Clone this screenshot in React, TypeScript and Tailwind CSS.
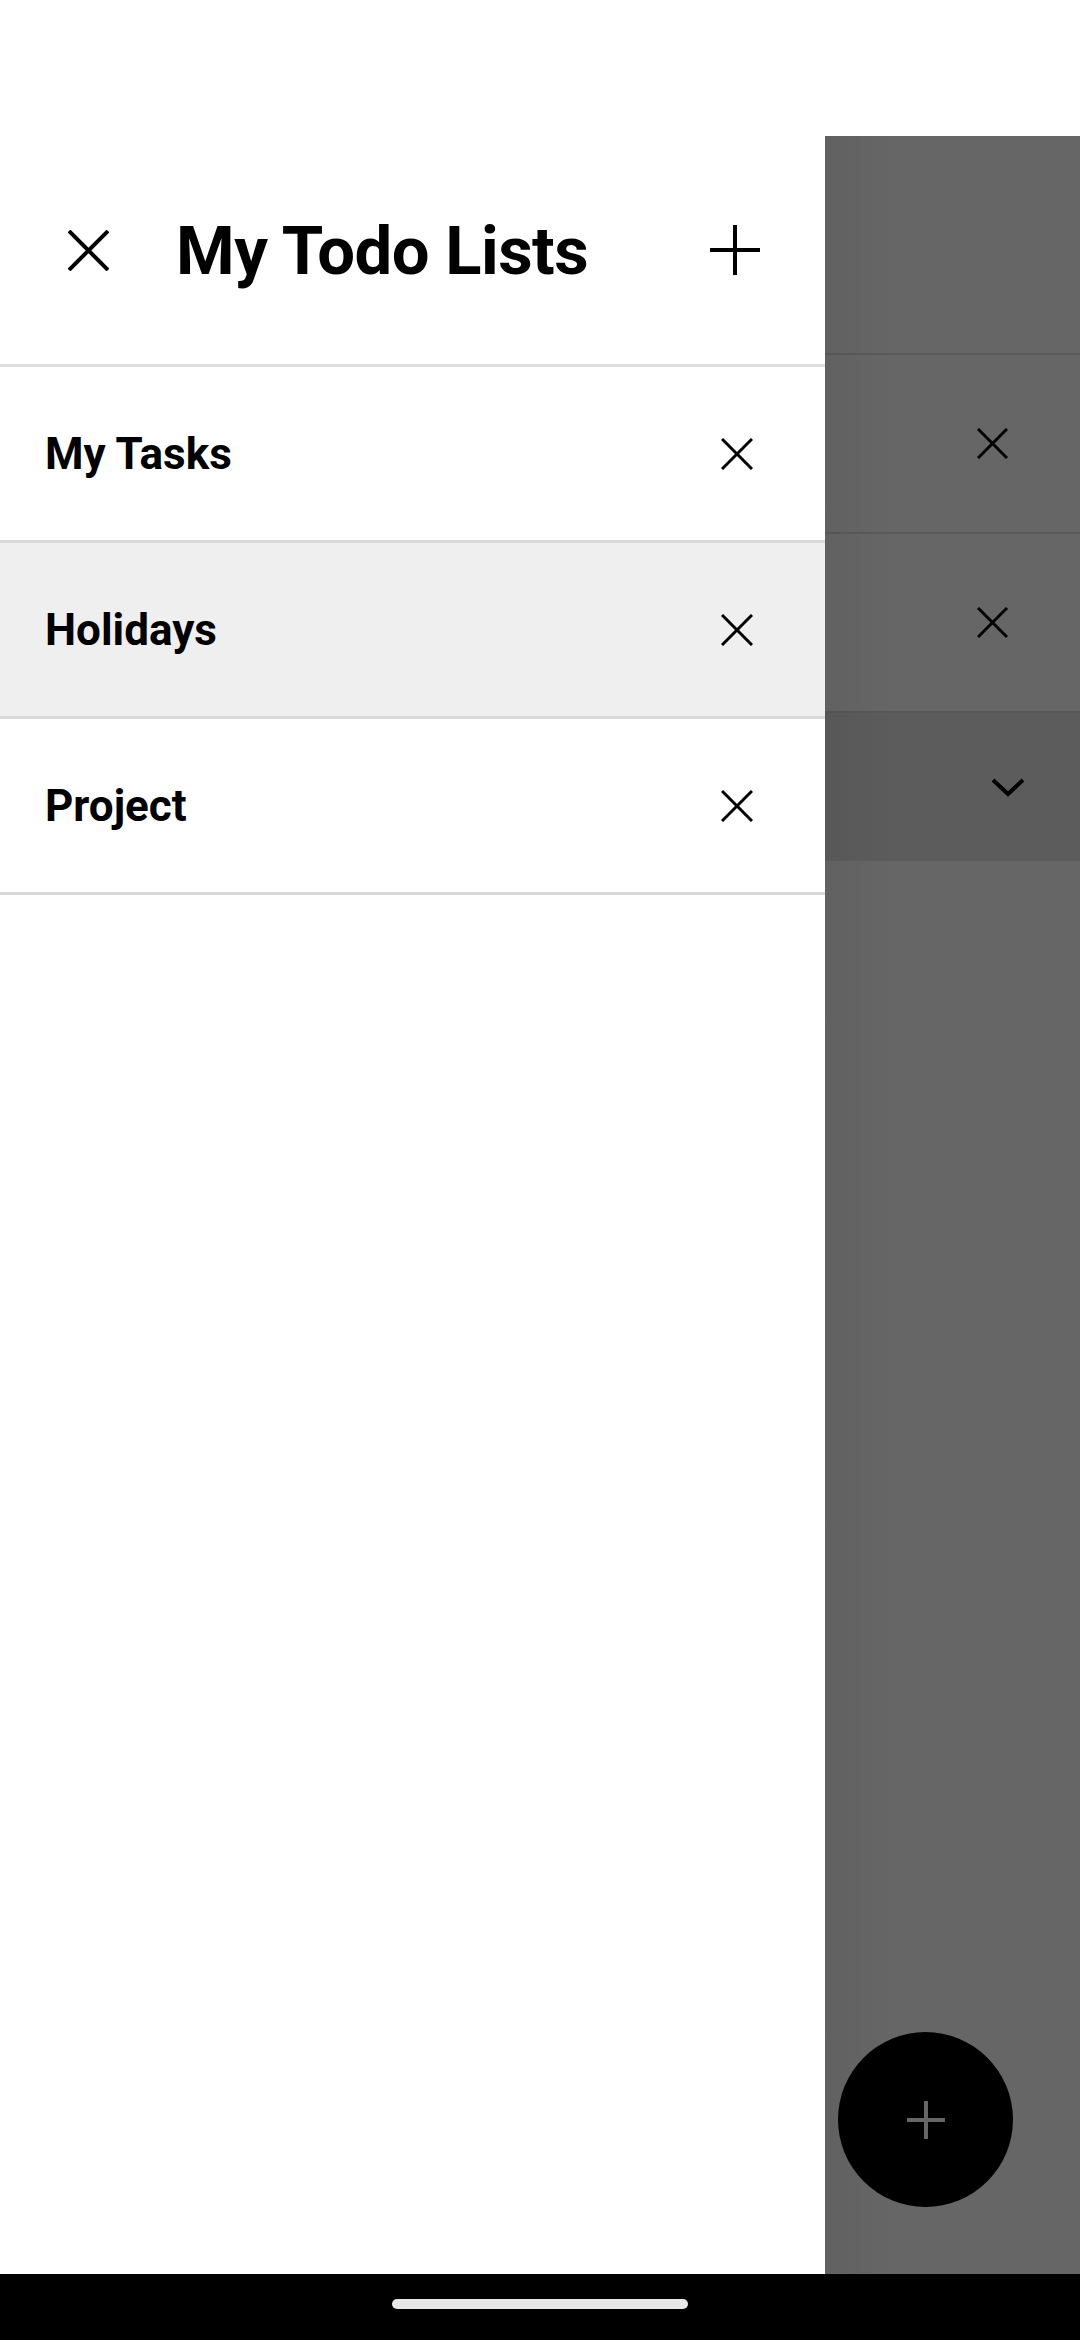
import React from "react";

function XIcon({ size, stroke, color = "#000" }: { size: number; stroke: number; color?: string }) {
  return (
    <svg width={size} height={size} viewBox={`0 0 ${size} ${size}`} fill="none">
      <line x1={1} y1={1} x2={size - 1} y2={size - 1} stroke={color} strokeWidth={stroke} />
      <line x1={size - 1} y1={1} x2={1} y2={size - 1} stroke={color} strokeWidth={stroke} />
    </svg>
  );
}

function PlusIcon({ size, stroke, color = "#000" }: { size: number; stroke: number; color?: string }) {
  return (
    <svg width={size} height={size} viewBox={`0 0 ${size} ${size}`} fill="none">
      <line x1={size / 2} y1={0} x2={size / 2} y2={size} stroke={color} strokeWidth={stroke} />
      <line x1={0} y1={size / 2} x2={size} y2={size / 2} stroke={color} strokeWidth={stroke} />
    </svg>
  );
}

function Chevron() {
  return (
    <svg width="34" height="20" viewBox="0 0 34 20" fill="none">
      <polyline points="2,3 17,17 32,3" stroke="#000" strokeWidth="4" fill="none" />
    </svg>
  );
}

const lists = [
  { name: "My Tasks", active: false },
  { name: "Holidays", active: true },
  { name: "Project", active: false },
];

export default function App() {
  return (
    <div
      className="w-[1080px] h-[2340px] flex flex-col bg-white overflow-hidden relative"
      style={{ fontFamily: "Roboto, 'Noto Sans', sans-serif" }}
    >
      <div className="h-[136px] bg-white shrink-0" />
      <div className="flex flex-row h-[2138px] shrink-0">
        {/* Drawer */}
        <div className="w-[825px] bg-white flex flex-col shrink-0">
          <div className="h-[228px] flex items-center shrink-0">
            <div className="w-[176px] flex items-center justify-center">
              <XIcon size={41} stroke={4} />
            </div>
            <div className="flex-1 text-[67px] font-bold text-black leading-none tracking-[-0.5px] mt-[2px]">
              My Todo Lists
            </div>
            <div className="w-[180px] flex items-center justify-center">
              <PlusIcon size={50} stroke={4} />
            </div>
          </div>
          <div className="h-[3px] bg-[#dedede] shrink-0" />
          {lists.map((l) => (
            <React.Fragment key={l.name}>
              <div
                className={`h-[173px] flex items-center justify-between shrink-0 pl-[45px] pr-[72px] ${
                  l.active ? "bg-[#efefef]" : "bg-white"
                }`}
              >
                <span className="text-[44px] font-bold text-black leading-none">{l.name}</span>
                <XIcon size={32} stroke={3} />
              </div>
              <div className="h-[3px] bg-[#d9d9d9] shrink-0" />
            </React.Fragment>
          ))}
          <div className="flex-1" />
        </div>

        {/* Dimmed content behind the drawer */}
        <div className="flex-1 bg-[#666666] flex flex-col relative">
          <div className="absolute inset-y-0 left-0 w-[70px] bg-gradient-to-r from-[rgba(0,0,0,0.05)] to-transparent pointer-events-none" />
          <div className="h-[217px] shrink-0" />
          <div className="h-[2px] bg-[#5a5a5a] shrink-0" />
          <div className="h-[177px] flex items-center shrink-0 pl-[152px]">
            <XIcon size={31} stroke={3} />
          </div>
          <div className="h-[2px] bg-[#5a5a5a] shrink-0" />
          <div className="h-[177px] flex items-center shrink-0 pl-[152px]">
            <XIcon size={31} stroke={3} />
          </div>
          <div className="h-[2px] bg-[#575757] shrink-0" />
          <div className="h-[148px] bg-[#5c5c5c] flex items-center shrink-0 pl-[166px]">
            <Chevron />
          </div>
          <div className="flex-1" />
          <div className="absolute left-[13px] top-[1896px] w-[175px] h-[175px] rounded-full bg-black flex items-center justify-center">
            <PlusIcon size={38} stroke={4} color="#666666" />
          </div>
        </div>
      </div>
      <div className="h-[66px] bg-black flex items-center justify-center shrink-0">
        <div className="w-[296px] h-[10px] rounded-full bg-[#e8e8e8] mt-[-6px]" />
      </div>
    </div>
  );
}
